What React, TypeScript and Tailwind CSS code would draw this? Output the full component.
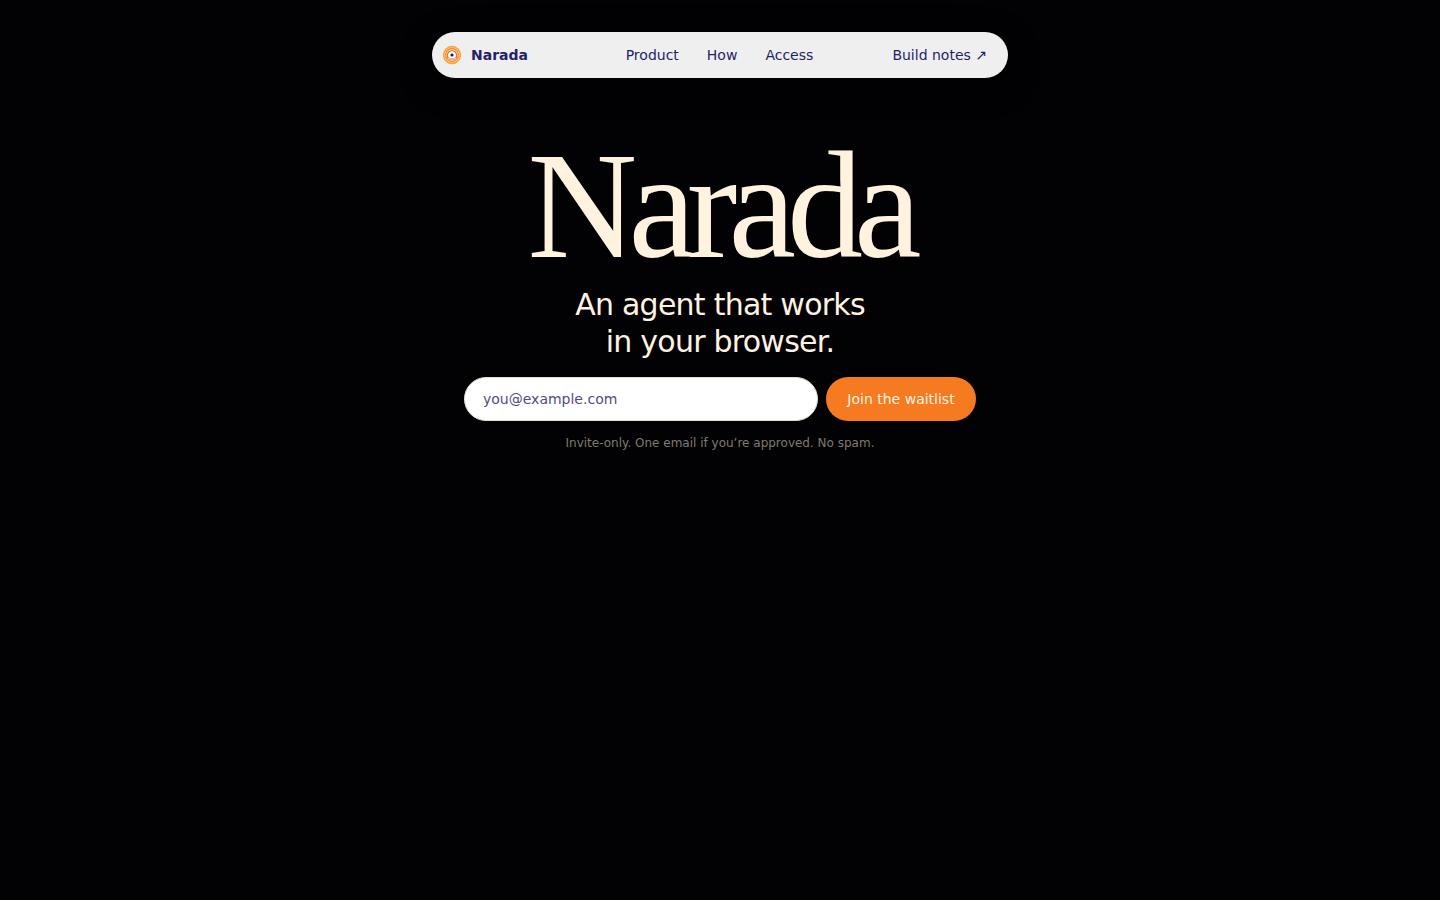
const links = [
  { label: 'Product', href: '#product' },
  { label: 'How', href: '#how' },
  { label: 'Access', href: '#access' },
];

const Logo = () => (
  <svg viewBox="0 0 20 20" className="size-5" fill="none" aria-hidden="true">
    <circle cx="10" cy="10" r="8.4" stroke="#fda43c" strokeWidth="1.6" />
    <circle cx="10" cy="10" r="6.4" stroke="#fa8f28" strokeWidth="1.5" />
    <path d="M6.4 13.2a4.6 4.6 0 1 1 7.2 0" stroke="#dd6f26" strokeWidth="1.2" />
    <circle cx="10" cy="10" r="3.2" fill="#fff" />
    <path d="M6.8 14h6.4" stroke="#f58a2c" strokeWidth="1.2" />
    <circle cx="10" cy="10" r="1.6" fill="#211a63" />
  </svg>
);

const Header = () => (
  <header className="mx-auto grid h-[46px] w-full max-w-xl grid-cols-[1fr_auto_1fr] items-center rounded-full bg-[#efefef] pr-[21px] pl-2.5 text-sm text-[#261e68] shadow-[0_8px_32px_rgba(0,0,0,0.4)]">
    <a href="#top" className="flex items-center gap-[9px] font-bold">
      <Logo />
      Narada
    </a>
    <nav className="ml-2.5 flex items-center gap-7">
      {links.map((link) => (
        <a key={link.label} href={link.href}>
          {link.label}
        </a>
      ))}
    </nav>
    <a href="#notes" className="justify-self-end">
      Build notes ↗
    </a>
  </header>
);

const WaitlistForm = () => (
  <form className="mt-[17px] flex w-full max-w-lg gap-2" onSubmit={(e) => e.preventDefault()}>
    <input
      type="email"
      aria-label="Email address"
      placeholder="you@example.com"
      className="h-11 min-w-0 grow rounded-full border border-[#e5dccb] bg-white px-[18px] text-sm text-[#261e68] placeholder:text-[#514b86]"
    />
    <button type="submit" className="h-11 w-[150px] shrink-0 rounded-full bg-[#f57a20] text-sm text-[#fff3e0]">
      Join the waitlist
    </button>
  </form>
);

export default function App() {
  return (
    <div className="min-h-screen bg-[#020204] px-4 pt-8 font-['DejaVu_Sans',sans-serif]">
      <Header />
      <main className="mt-[60px] flex flex-col items-center text-center text-[#fff3e0]">
        <h1 className="font-['Liberation_Serif',serif] text-[152px] leading-[136px] tracking-[-9px]">Narada</h1>
        <p className="mt-3 text-[30px] leading-[37px] tracking-tight">
          An agent that works
          <br />
          in your browser.
        </p>
        <WaitlistForm />
        <p className="mt-3.5 text-xs leading-4 text-[#807a71]">
          Invite-only. One email if you’re approved. No spam.
        </p>
      </main>
    </div>
  );
}
